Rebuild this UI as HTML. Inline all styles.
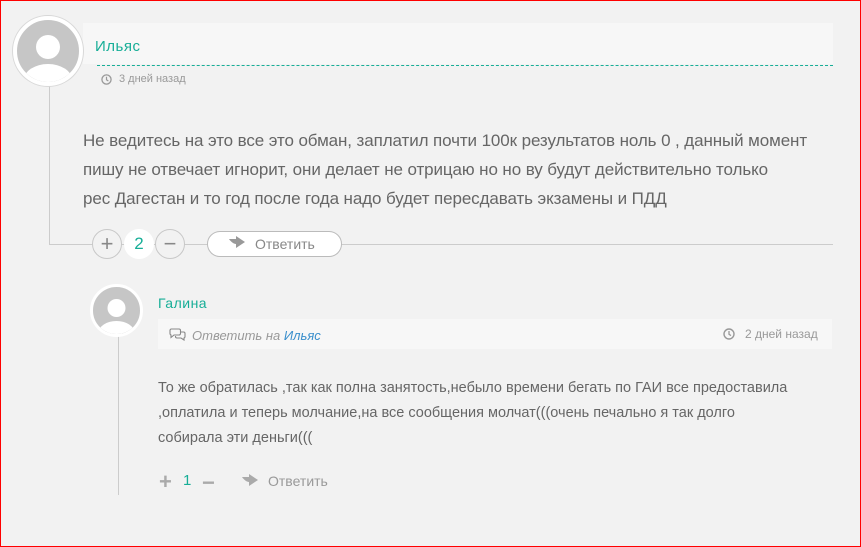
<!DOCTYPE html>
<html><head><meta charset="utf-8"><style>
*{margin:0;padding:0;box-sizing:border-box}
body{width:861px;height:547px;background:#f2f2f2;font-family:"Liberation Sans","DejaVu Sans",sans-serif;position:relative;overflow:hidden}
.frame{position:absolute;left:0;top:0;width:861px;height:547px;border:1px solid #f00;z-index:5}
.a{position:absolute}
.av{position:absolute;border-radius:50%;background:#c6c6c6;border:3px solid #fff;box-shadow:0 0 0 1px #d8d8d8;overflow:hidden}
.txt{color:#666;white-space:nowrap}
.teal{color:#17ae97}
.circ{position:absolute;width:30px;height:30px;border-radius:50%;border:1px solid #c8c8c8;background:#f2f2f2;color:#888;text-align:center;line-height:28px;font-size:22px}
</style></head><body>
<div class="frame"></div>
<div class="a" style="left:49px;top:86px;width:1px;height:158px;background:#ccc"></div>
<div class="a" style="left:49px;top:244px;width:784px;height:1px;background:#ccc"></div>
<div class="a" style="left:83px;top:23px;width:750px;height:41px;background:#f7f7f7"></div>
<div class="a" style="left:97px;top:65px;width:736px;border-top:1px dashed #17ae97"></div>
<div class="av" style="left:13px;top:16px;width:70px;height:70px;border-width:4px">
<svg width="62" height="62" viewBox="0 0 62 62"><circle cx="31" cy="27" r="12" fill="#fff"/><ellipse cx="31" cy="60" rx="24" ry="16" fill="#fff"/></svg></div>
<div class="a teal" style="left:95px;top:38px;font-size:15px;letter-spacing:.5px">Ильяс</div>
<svg class="a" style="left:101px;top:74px" width="11" height="11" viewBox="0 0 12 12"><circle cx="6" cy="6" r="5" fill="none" stroke="#999" stroke-width="1.4"/><path d="M6 3v3.3l2 1.3" fill="none" stroke="#999" stroke-width="1.3"/></svg>
<div class="a" style="left:119px;top:73px;font-size:11px;color:#999">3 дней назад</div>
<div class="a txt" style="left:83px;top:126px;font-size:17px;line-height:29px;letter-spacing:-0.1px">Не ведитесь на это все это обман, заплатил почти 100к результатов ноль 0 , данный момент<br>пишу не отвечает игнорит, они делает не отрицаю но но ву будут действительно только<br>рес Дагестан и то год после года надо будет пересдавать экзамены и ПДД</div>
<div class="circ" style="left:92px;top:229px">+</div>
<div class="a" style="left:124px;top:229px;width:30px;height:30px;border-radius:50%;background:#fff;text-align:center;line-height:30px;font-size:17px;color:#17ae97">2</div>
<div class="circ" style="left:155px;top:229px">−</div>
<div class="a" style="left:207px;top:231px;width:135px;height:26px;border:1px solid #bbb;border-radius:13px;background:#fff"></div>
<svg class="a" style="left:228px;top:236px" width="18" height="14" viewBox="0 0 18 14"><path d="M1 3h7V0l9 6-9 6V8C6 8 3 6 1 3z" fill="#999"/></svg>
<div class="a" style="left:255px;top:236px;font-size:14px;color:#888">Ответить</div>

<div class="a" style="left:118px;top:336px;width:1px;height:159px;background:#ccc"></div>
<div class="av" style="left:90px;top:284px;width:53px;height:53px;box-shadow:none">
<svg width="47" height="47" viewBox="0 0 47 47"><circle cx="23.5" cy="21" r="9" fill="#fff"/><ellipse cx="23.5" cy="46" rx="18" ry="12" fill="#fff"/></svg></div>
<div class="a teal" style="left:158px;top:295px;font-size:14px;letter-spacing:.5px">Галина</div>
<div class="a" style="left:158px;top:319px;width:674px;height:30px;background:#f7f7f7"></div>
<svg class="a" style="left:169px;top:328px" width="17" height="13" viewBox="0 0 17 13"><path d="M2 1h8a1.5 1.5 0 011.5 1.5v3A1.5 1.5 0 0110 7H5L2 9.5V7a1.5 1.5 0 01-1-1.4v-3A1.5 1.5 0 012 1z M12 4h2.5A1.5 1.5 0 0116 5.5v3A1.5 1.5 0 0115 10v2l-3-2H8a1.5 1.5 0 01-1.5-1.5V8" fill="none" stroke="#888" stroke-width="1.1"/></svg>
<div class="a" style="left:192px;top:328px;font-size:13px;font-style:italic;color:#999">Ответить на <span style="color:#3a8fcc">Ильяс</span></div>
<svg class="a" style="left:723px;top:328px" width="12" height="12" viewBox="0 0 12 12"><circle cx="6" cy="6" r="5" fill="none" stroke="#999" stroke-width="1.4"/><path d="M6 3v3.3l2 1.3" fill="none" stroke="#999" stroke-width="1.3"/></svg>
<div class="a" style="left:745px;top:327px;font-size:12px;color:#999">2 дней назад</div>
<div class="a txt" style="left:158px;top:376px;font-size:14.5px;line-height:25px">То же обратилась ,так как полна занятость,небыло времени бегать по ГАИ все предоставила<br>,оплатила и теперь молчание,на все сообщения молчат(((очень печально я так долго<br>собирала эти деньги(((</div>
<div class="a" style="left:159px;top:469px;font-size:22px;color:#aaa;font-weight:bold">+</div>
<div class="a teal" style="left:183px;top:472px;font-size:15px">1</div>
<div class="a" style="left:202px;top:470px;font-size:22px;color:#aaa;font-weight:bold">−</div>
<svg class="a" style="left:241px;top:474px" width="18" height="14" viewBox="0 0 18 14"><path d="M1 3h7V0l9 6-9 6V8C6 8 3 6 1 3z" fill="#aaa"/></svg>
<div class="a" style="left:268px;top:473px;font-size:14px;color:#999">Ответить</div>
</body></html>
